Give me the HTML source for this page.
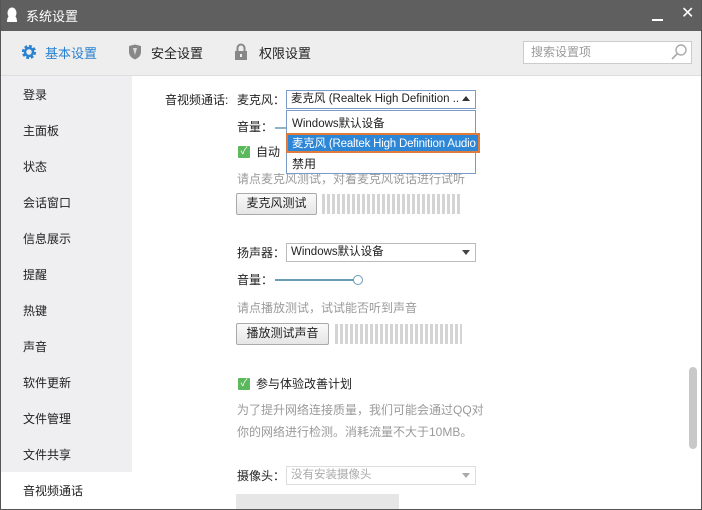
<!DOCTYPE html>
<html><head><meta charset="utf-8"><style>
*{margin:0;padding:0;box-sizing:border-box}
body{width:702px;height:510px;overflow:hidden;font-family:"Liberation Sans","Microsoft YaHei","Noto Sans CJK SC",sans-serif;font-size:12px;color:#222;background:#fff;position:relative}
.a{position:absolute;white-space:nowrap}
span.a{margin-top:-2px}
#title{left:0;top:0;width:702px;height:31px;background:#5f5f5f;color:#fff;font-size:13px}
#tool{left:0;top:31px;width:702px;height:45px;background:#eeeeee;border-bottom:1px solid #ddd}
#side{left:0;top:76px;width:132px;height:396px;background:#efeff1}
.si{left:23px;font-size:12px;color:#222}
.frame{left:0;top:0;width:702px;height:510px;border:1px solid #555;border-top:none;pointer-events:none}
.box{border:1px solid #bbb;background:#fff;height:19px;padding-left:4px;line-height:16px;font-size:11.5px}
.btn{border:1px solid #aaa;background:linear-gradient(#fafafa,#e6e6e6);height:22px;line-height:19px;text-align:center;border-radius:2px}
.meter{height:20px;background:repeating-linear-gradient(90deg,#d4d4d4 0 3px,#fff 3px 5px)}
.gray{color:#9a9a9a}
.chk{width:12px;height:12px;background:#5cb85c;border-radius:1px;color:#fff;font-size:10px;line-height:12px;text-align:center}
.tri{width:0;height:0;border-left:4px solid transparent;border-right:4px solid transparent}
</style></head><body>
<div class="a" id="title">
 <svg class="a" style="left:6px;top:7px" width="12" height="16"><ellipse cx="6" cy="6" rx="4.5" ry="5.5" fill="#fff"/><path d="M1 15 Q1 8 6 8 Q11 8 11 15Z" fill="#fff"/></svg>
 <span class="a" style="left:26px;top:8px">系统设置</span>
 <div class="a" style="left:652px;top:19px;width:11px;height:2px;background:#fff"></div>
 <span class="a" style="left:681px;top:5px;font-size:16px">✕</span>
</div>
<div class="a" id="tool">
 <svg class="a" style="left:21px;top:13px" width="16" height="16" viewBox="0 0 16 16"><circle cx="8" cy="8" r="5.5" fill="none" stroke="#2a82d0" stroke-width="3.2" stroke-dasharray="2.6 1.7"/><circle cx="8" cy="8" r="4" fill="none" stroke="#2a82d0" stroke-width="2.5"/></svg>
 <span class="a" style="left:45px;top:14px;color:#2a82d0;font-size:13px">基本设置</span>
 <svg class="a" style="left:128px;top:13px" width="14" height="16"><path d="M1 2 L7 0.5 L13 2 L13 8 Q13 13 7 15.5 Q1 13 1 8Z" fill="#888"/><path d="M5 4 L9 4 L7 11Z" fill="#ddd"/></svg>
 <span class="a" style="left:151px;top:14px;font-size:13px">安全设置</span>
 <svg class="a" style="left:234px;top:12px" width="14" height="18"><path d="M3.5 8 V5 A3.5 3.5 0 0 1 10.5 5 V8" fill="none" stroke="#888" stroke-width="2"/><rect x="1" y="8" width="12" height="9" fill="#888"/><rect x="6" y="11" width="2" height="3" fill="#eee"/></svg>
 <span class="a" style="left:259px;top:14px;font-size:13px">权限设置</span>
 <div class="a" style="left:523px;top:10px;width:169px;height:23px;border:1px solid #ccc;background:#fff"></div>
 <span class="a gray" style="left:531px;top:14px">搜索设置项</span>
 <svg class="a" style="left:670px;top:12px" width="18" height="18"><circle cx="11" cy="7" r="5" fill="none" stroke="#aaa" stroke-width="1.4"/><path d="M7.5 10.5 L2 16" stroke="#aaa" stroke-width="1.6"/></svg>
</div>
<div class="a" id="side"></div>
<span class="a si" style="top:88px">登录</span>
<span class="a si" style="top:124px">主面板</span>
<span class="a si" style="top:160px">状态</span>
<span class="a si" style="top:196px">会话窗口</span>
<span class="a si" style="top:232px">信息展示</span>
<span class="a si" style="top:268px">提醒</span>
<span class="a si" style="top:304px">热键</span>
<span class="a si" style="top:340px">声音</span>
<span class="a si" style="top:376px">软件更新</span>
<span class="a si" style="top:412px">文件管理</span>
<span class="a si" style="top:448px">文件共享</span>
<span class="a si" style="top:484px">音视频通话</span>

<span class="a" style="left:165px;top:93px">音视频通话:</span>
<span class="a" style="left:237px;top:93px">麦克风：</span>
<div class="a box" style="left:286px;top:90px;width:190px;border-color:#7a9cc6">麦克风 (Realtek High Definition ...</div>
<div class="a" style="left:458px;top:91px;width:16px;height:16px;background:#fff"></div>
<div class="a tri" style="left:462px;top:96px;border-bottom:5px solid #333"></div>
<span class="a" style="left:237px;top:120px">音量：</span>
<div class="a" style="left:275px;top:127px;width:12px;height:2px;background:#8fb3c5"></div>
<div class="a chk" style="left:238px;top:146px">✓</div>
<span class="a" style="left:256px;top:145px">自动</span>
<span class="a gray" style="left:237px;top:172px">请点麦克风测试，对着麦克风说话进行试听</span>
<div class="a btn" style="left:236px;top:193px;width:81px">麦克风测试</div>
<div class="a meter" style="left:322px;top:194px;width:140px"></div>
<div class="a" style="left:286px;top:110px;width:190px;height:64px;border:1px solid #7a9cc6;background:#fff"></div>
<span class="a" style="left:292px;top:117px;font-size:11.5px">Windows默认设备</span>
<div class="a" style="left:286px;top:133px;width:194px;height:20px;border:2px solid #e07b3a;background:#2e86d6"></div>
<span class="a" style="left:292px;top:137px;color:#fff;width:186px;overflow:hidden;font-size:11.5px;letter-spacing:-0.2px">麦克风 (Realtek High Definition Audio</span>
<span class="a" style="left:292px;top:157px">禁用</span>

<span class="a" style="left:237px;top:246px">扬声器：</span>
<div class="a box" style="left:286px;top:243px;width:190px">Windows默认设备</div>
<div class="a tri" style="left:462px;top:250px;border-top:5px solid #444"></div>
<span class="a" style="left:237px;top:273px">音量：</span>
<div class="a" style="left:275px;top:279px;width:80px;height:2px;background:#6a9bb5"></div>
<div class="a" style="left:353px;top:275px;width:10px;height:10px;border:1px solid #6a9bb5;border-radius:50%;background:#fff"></div>
<span class="a gray" style="left:237px;top:301px">请点播放测试，试试能否听到声音</span>
<div class="a btn" style="left:236px;top:323px;width:93px">播放测试声音</div>
<div class="a meter" style="left:335px;top:324px;width:127px"></div>

<div class="a chk" style="left:238px;top:378px">✓</div>
<span class="a" style="left:256px;top:377px">参与体验改善计划</span>
<span class="a gray" style="left:237px;top:403px">为了提升网络连接质量，我们可能会通过QQ对</span>
<span class="a gray" style="left:237px;top:425px">你的网络进行检测。消耗流量不大于10MB。</span>
<span class="a" style="left:237px;top:469px">摄像头：</span>
<div class="a box" style="left:286px;top:466px;width:190px;border-color:#ddd;color:#aaa">没有安装摄像头</div>
<div class="a tri" style="left:462px;top:473px;border-top:5px solid #aaa"></div>
<div class="a" style="left:236px;top:494px;width:163px;height:16px;background:#e6e6e6"></div>
<div class="a" style="left:689px;top:367px;width:8px;height:82px;background:#c8c8c8;border-radius:4px"></div>
<div class="a frame"></div>
</body></html>
